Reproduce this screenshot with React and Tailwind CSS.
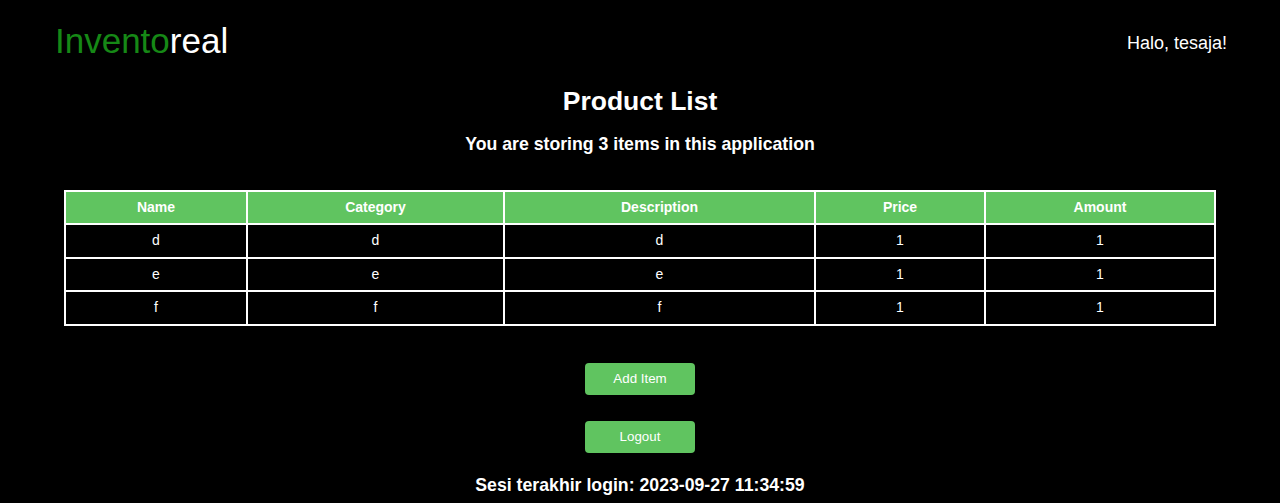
export default function App() {
  const rows = [
    ["d", "d", "d", "1", "1"],
    ["e", "e", "e", "1", "1"],
    ["f", "f", "f", "1", "1"],
  ];
  const heads = ["Name", "Category", "Description", "Price", "Amount"];
  const widths = ["w-[182px]", "w-[257px]", "w-[311px]", "w-[170px]", "w-[230px]"];
  return (
    <div className="min-h-[503px] bg-black text-white font-['Liberation_Sans',Arial,sans-serif]">
      <nav className="flex h-[80px] items-center justify-between pl-[55px] pr-[53px]">
        <div className="text-[35px] leading-none">
          <span className="text-[#168816]">Invento</span>
          <span className="text-white">real</span>
        </div>
        <div className="mt-[6px] text-[18px] leading-none">Halo, tesaja!</div>
      </nav>
      <div className="flex flex-col items-center">
        <h1 className="mt-[8px] text-[26.5px] font-bold leading-[27px]">Product List</h1>
        <h3 className="mt-[20px] text-[17.7px] font-bold leading-[18px]">
          You are storing 3 items in this application
        </h3>
        <table className="mt-[37px] w-[1152px] border-collapse border-2 border-white text-[14px]">
          <thead>
            <tr>
              {heads.map((h, i) => (
                <th
                  key={h}
                  className={`${widths[i]} border-2 border-white bg-[#60c460] py-[7px] text-center font-bold leading-[17px] text-white`}
                >
                  {h}
                </th>
              ))}
            </tr>
          </thead>
          <tbody>
            {rows.map((r, ri) => (
              <tr key={ri}>
                {r.map((c, ci) => (
                  <td
                    key={ci}
                    className="border-2 border-white py-[7px] text-center leading-[17.5px]"
                  >
                    {c}
                  </td>
                ))}
              </tr>
            ))}
          </tbody>
        </table>
        <button className="mt-[37px] h-[32px] w-[110px] rounded-[4px] bg-[#60c460] text-[13.33px] text-white">
          Add Item
        </button>
        <button className="mt-[26px] h-[32px] w-[110px] rounded-[4px] bg-[#60c460] text-[13.33px] text-white">
          Logout
        </button>
        <h3 className="mt-[23px] text-[17.7px] font-bold leading-[18px]">
          Sesi terakhir login: 2023-09-27 11:34:59
        </h3>
      </div>
    </div>
  );
}
